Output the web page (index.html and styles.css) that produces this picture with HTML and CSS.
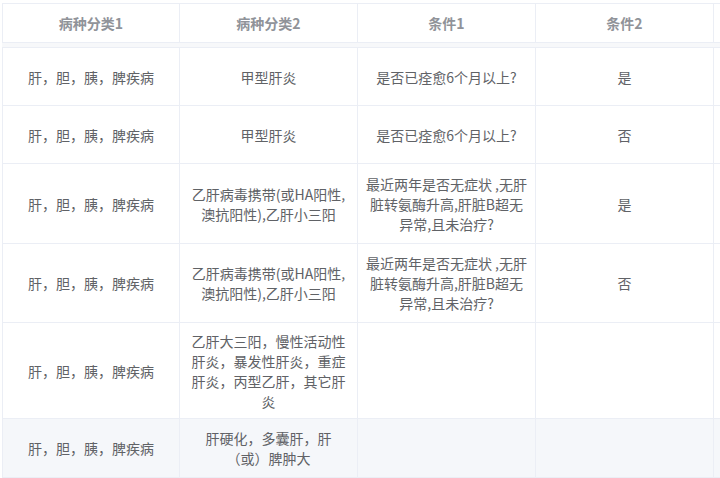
FILE: index.html
```html
<!DOCTYPE html>
<html lang="zh-CN">
<head>
<meta charset="utf-8">
<title>病种分类</title>
<link rel="stylesheet" href="styles.css">
</head>
<body>
<div class="wrap">
  <table class="tbl head">
    <colgroup><col class="c1"><col class="c"><col class="c"><col class="c"><col class="c"></colgroup>
    <tr class="h-head">
      <th>病种分类1</th><th>病种分类2</th><th>条件1</th><th>条件2</th><th></th>
    </tr>
  </table>
  <div class="band"></div>
  <table class="tbl body">
    <colgroup><col class="c1"><col class="c"><col class="c"><col class="c"><col class="c"></colgroup>
    <tr class="h58">
      <td>肝，胆，胰，脾疾病</td><td>甲型肝炎</td><td>是否已痊愈6个月以上?</td><td>是</td><td></td>
    </tr>
    <tr class="h58">
      <td>肝，胆，胰，脾疾病</td><td>甲型肝炎</td><td>是否已痊愈6个月以上?</td><td>否</td><td></td>
    </tr>
    <tr class="h80">
      <td>肝，胆，胰，脾疾病</td><td>乙肝病毒携带(或HA阳性,<br>澳抗阳性),乙肝小三阳</td><td>最近两年是否无症状 ,无肝<br>脏转氨酶升高,肝脏B超无<br>异常,且未治疗?</td><td>是</td><td></td>
    </tr>
    <tr class="h79">
      <td>肝，胆，胰，脾疾病</td><td>乙肝病毒携带(或HA阳性,<br>澳抗阳性),乙肝小三阳</td><td>最近两年是否无症状 ,无肝<br>脏转氨酶升高,肝脏B超无<br>异常,且未治疗?</td><td>否</td><td></td>
    </tr>
    <tr class="h96">
      <td>肝，胆，胰，脾疾病</td><td>乙肝大三阳，慢性活动性<br>肝炎，暴发性肝炎，重症<br>肝炎，丙型乙肝，其它肝<br>炎</td><td></td><td></td><td></td>
    </tr>
    <tr class="h59 hover">
      <td>肝，胆，胰，脾疾病</td><td>肝硬化，多囊肝，肝<br>（或）脾肿大</td><td></td><td></td><td></td>
    </tr>
  </table>
</div>
</body>
</html>
```

FILE: styles.css
```css
html, body {
  margin: 0;
  padding: 0;
  background: #ffffff;
  overflow: hidden;
}
.wrap {
  box-sizing: border-box;
  padding: 3px 0 0 2px;
  width: 720px;
  height: 478px;
  overflow: hidden;
  font-family: "Noto Sans CJK SC", "Microsoft YaHei", sans-serif;
  font-size: 14px;
}
.tbl {
  border-collapse: separate;
  border-spacing: 0;
  table-layout: fixed;
  width: 890px;
  border-left: 1px solid #ebeef5;
  border-top: 1px solid #ebeef5;
}
.c1 { width: 177px; }
.c { width: 178px; }
.tbl th, .tbl td {
  box-sizing: border-box;
  padding: 0 6px;
  border-right: 1px solid #ebeef5;
  border-bottom: 1px solid #ebeef5;
  text-align: center;
  vertical-align: middle;
  line-height: 20px;
  white-space: nowrap;
  overflow: hidden;
}
.tbl th {
  color: #909399;
  font-weight: bold;
  background: #ffffff;
}
.tbl td {
  color: #606266;
  font-weight: normal;
}
.h-head { height: 39px; }
.band {
  width: 891px;
  height: 4px;
  background: #f7f8fa;
}
.h58 { height: 58px; }
.h59 { height: 59px; }
.h79 { height: 79px; }
.h80 { height: 80px; }
.h96 { height: 96px; }
.hover td { background: #f5f7fa; }
```
